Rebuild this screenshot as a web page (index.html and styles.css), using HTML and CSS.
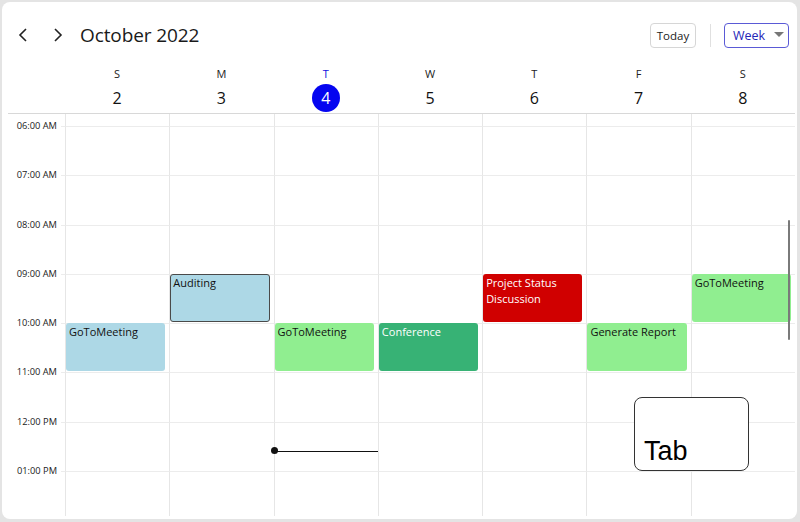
FILE: index.html
```html
<!DOCTYPE html>
<html>
<head>
<meta charset="utf-8">
<link rel="stylesheet" href="styles.css">
</head>
<body>
<div class="window">
  <div class="toolbar">
    <button class="nav" aria-label="Previous"><svg width="12" height="16" viewBox="0 0 12 16"><path d="M9 2 L3 8 L9 14" fill="none" stroke="#222" stroke-width="1.6"/></svg></button>
    <button class="nav" aria-label="Next"><svg width="12" height="16" viewBox="0 0 12 16"><path d="M3 2 L9 8 L3 14" fill="none" stroke="#222" stroke-width="1.6"/></svg></button>
    <div class="title">October 2022</div>
    <div class="spacer"></div>
    <button class="today">Today</button>
    <div class="sep"></div>
    <button class="view">Week <svg width="10" height="6" viewBox="0 0 10 6"><path d="M0 0 L10 0 L5 5 Z" fill="#777"/></svg></button>
  </div>
  <div class="dayhead">
    <div class="dh-spacer"></div>
    <div class="dh"><span class="dl">S</span><span class="dn">2</span></div>
    <div class="dh"><span class="dl">M</span><span class="dn">3</span></div>
    <div class="dh cur"><span class="dl">T</span><span class="dn">4</span></div>
    <div class="dh"><span class="dl">W</span><span class="dn">5</span></div>
    <div class="dh"><span class="dl">T</span><span class="dn">6</span></div>
    <div class="dh"><span class="dl">F</span><span class="dn">7</span></div>
    <div class="dh"><span class="dl">S</span><span class="dn">8</span></div>
  </div>
  <div class="body">
    <div class="rows">
      <div class="row"><div class="time"><span></span></div><div class="c"></div><div class="c"></div><div class="c"></div><div class="c"></div><div class="c"></div><div class="c"></div><div class="c"></div></div>
      <div class="row"><div class="time"><span>06:00 AM</span></div><div class="c"></div><div class="c"></div><div class="c"></div><div class="c"></div><div class="c"></div><div class="c"></div><div class="c"></div></div>
      <div class="row"><div class="time"><span>07:00 AM</span></div><div class="c"></div><div class="c"></div><div class="c"></div><div class="c"></div><div class="c"></div><div class="c"></div><div class="c"></div></div>
      <div class="row"><div class="time"><span>08:00 AM</span></div><div class="c"></div><div class="c"></div><div class="c"></div><div class="c"></div><div class="c"></div><div class="c"></div><div class="c"></div></div>
      <div class="row"><div class="time"><span>09:00 AM</span></div>
        <div class="c"></div>
        <div class="c"><div class="ev blue sel">Auditing</div></div>
        <div class="c"></div>
        <div class="c"></div>
        <div class="c"><div class="ev red">Project Status Discussion</div></div>
        <div class="c"></div>
        <div class="c"><div class="ev green">GoToMeeting</div></div>
      </div>
      <div class="row"><div class="time"><span>10:00 AM</span></div>
        <div class="c"><div class="ev blue">GoToMeeting</div></div>
        <div class="c"></div>
        <div class="c"><div class="ev green">GoToMeeting</div></div>
        <div class="c"><div class="ev sea">Conference</div></div>
        <div class="c"></div>
        <div class="c"><div class="ev green">Generate Report</div></div>
        <div class="c"></div>
      </div>
      <div class="row"><div class="time"><span>11:00 AM</span></div><div class="c"></div><div class="c"></div><div class="c"></div><div class="c"></div><div class="c"></div><div class="c"></div><div class="c"></div></div>
      <div class="row"><div class="time"><span>12:00 PM</span></div><div class="c"></div><div class="c"></div><div class="c now"><div class="nowline"></div></div><div class="c"></div><div class="c"></div><div class="c"></div><div class="c"></div></div>
      <div class="row"><div class="time"><span>01:00 PM</span></div><div class="c"></div><div class="c"></div><div class="c"></div><div class="c"></div><div class="c"></div><div class="c"></div><div class="c"></div></div>
      <div class="row"><div class="time"><span></span></div><div class="c"></div><div class="c"></div><div class="c"></div><div class="c"></div><div class="c"></div><div class="c"></div><div class="c"></div></div>
    </div>
    <div class="scrollbar"></div>
  </div>
  <div class="tip">Tab</div>
</div>
</body>
</html>
```
FILE: styles.css
```css
* { box-sizing: border-box; }
html, body { margin: 0; padding: 0; }
body {
  background: #e4e4e4;
  padding: 2px 3px 3px 2px;
  width: 800px;
  height: 522px;
  font-family: "Open Sans", "Noto Sans", sans-serif;
  color: #111;
}
.window {
  position: relative;
  width: 795px;
  height: 517px;
  background: #fff;
  border-radius: 8px;
  overflow: hidden;
  display: flex;
  flex-direction: column;
}
.toolbar {
  display: flex;
  align-items: center;
  height: 45px;
  padding: 21px 8px 0 10px;
  flex: none;
}
.nav {
  width: 22px;
  height: 24px;
  border: 0;
  background: none;
  padding: 0;
  margin-right: 13px;
  display: flex;
  align-items: center;
  justify-content: center;
}
.title {
  font-size: 19px;
  color: #1a1a1a;
  margin-left: -2px;
  letter-spacing: -0.1px;
}
.spacer { flex: 1; }
.today {
  height: 25px;
  width: 46px;
  border: 1px solid #d6d6d6;
  border-radius: 4px;
  background: #fff;
  font-family: inherit;
  font-size: 11.5px;
  color: #222;
  padding: 0;
}
.sep {
  width: 1px;
  height: 23px;
  background: #e0e0e0;
  margin: 0 13px 0 14px;
}
.view {
  height: 25px;
  width: 65px;
  border: 1.5px solid #5a5ad6;
  border-radius: 4px;
  background: #fff;
  font-family: inherit;
  font-size: 12.5px;
  color: #2525b8;
  padding: 0 0 0 8px;
  display: flex;
  align-items: center;
  gap: 9px;
}
.dayhead {
  flex: none;
  display: flex;
  height: 67px;
  margin: 0 0 0 6px;
  width: 787px;
  border-bottom: 1px solid #d8d8d8;
}
.dh-spacer { width: 57px; flex: none; }
.dh {
  flex: 1;
  display: flex;
  flex-direction: column;
  align-items: center;
  padding-top: 19px;
}
.dl { font-size: 11px; line-height: 16px; color: #222; }
.dn {
  font-size: 16px;
  width: 28px;
  height: 28px;
  line-height: 28px;
  text-align: center;
  margin-top: 2px;
  border-radius: 50%;
}
.cur .dl { color: #1010e0; }
.cur .dn { background: #0505f0; color: #fff; }
.body {
  position: relative;
  height: 402px;
  overflow: hidden;
  flex: none;
}
.rows { margin-top: -37.3px; }
.row {
  display: flex;
  height: 49.3px;
  width: 793px;
}
.time {
  width: 63px;
  flex: none;
  position: relative;
  border-top: 1px solid transparent;
}
.time span {
  display: block;
  margin-top: -8px;
  padding-right: 8px;
  text-align: right;
  font-size: 9.3px;
  line-height: 14px;
  color: #222;
}
.time::after {
  content: "";
  position: absolute;
  right: 0;
  top: -1px;
  width: 4px;
  border-top: 1px solid #ececec;
}
.c {
  flex: 1;
  border-left: 1px solid #e6e6e6;
  border-top: 1px solid #ececec;
  position: relative;
}
.ev {
  height: 48px;
  margin: -1px 4px 0 0;
  border-radius: 3px;
  padding: 1px 3px;
  font-size: 11px;
  line-height: 16px;
  color: #111;
}
.blue { background: #add8e6; }
.green { background: #90ee90; }
.sea { background: #37b275; color: #fff; }
.red { background: #d00000; color: #fff; }
.sel { border: 1px solid #4a4a4a; padding: 0 2px; }
.nowline {
  position: absolute;
  left: 0;
  right: 0;
  top: 28px;
  border-top: 1.5px solid #111;
}
.nowline::before {
  content: "";
  position: absolute;
  left: -4px;
  top: -4.5px;
  width: 7px;
  height: 7px;
  border-radius: 50%;
  background: #111;
}
.scrollbar {
  position: absolute;
  left: 786px;
  top: 106px;
  width: 2px;
  height: 120px;
  background: #7a7a7a;
  border-radius: 1px;
}
.tip {
  position: absolute;
  left: 632px;
  top: 395px;
  width: 115px;
  height: 74px;
  border: 1px solid #333;
  border-radius: 8px;
  background: #fff;
  font-family: "Liberation Sans", Arial, sans-serif;
  font-size: 27px;
  color: #000;
  display: flex;
  align-items: flex-end;
  padding: 0 0 4px 9px;
  line-height: 30px;
}
```
